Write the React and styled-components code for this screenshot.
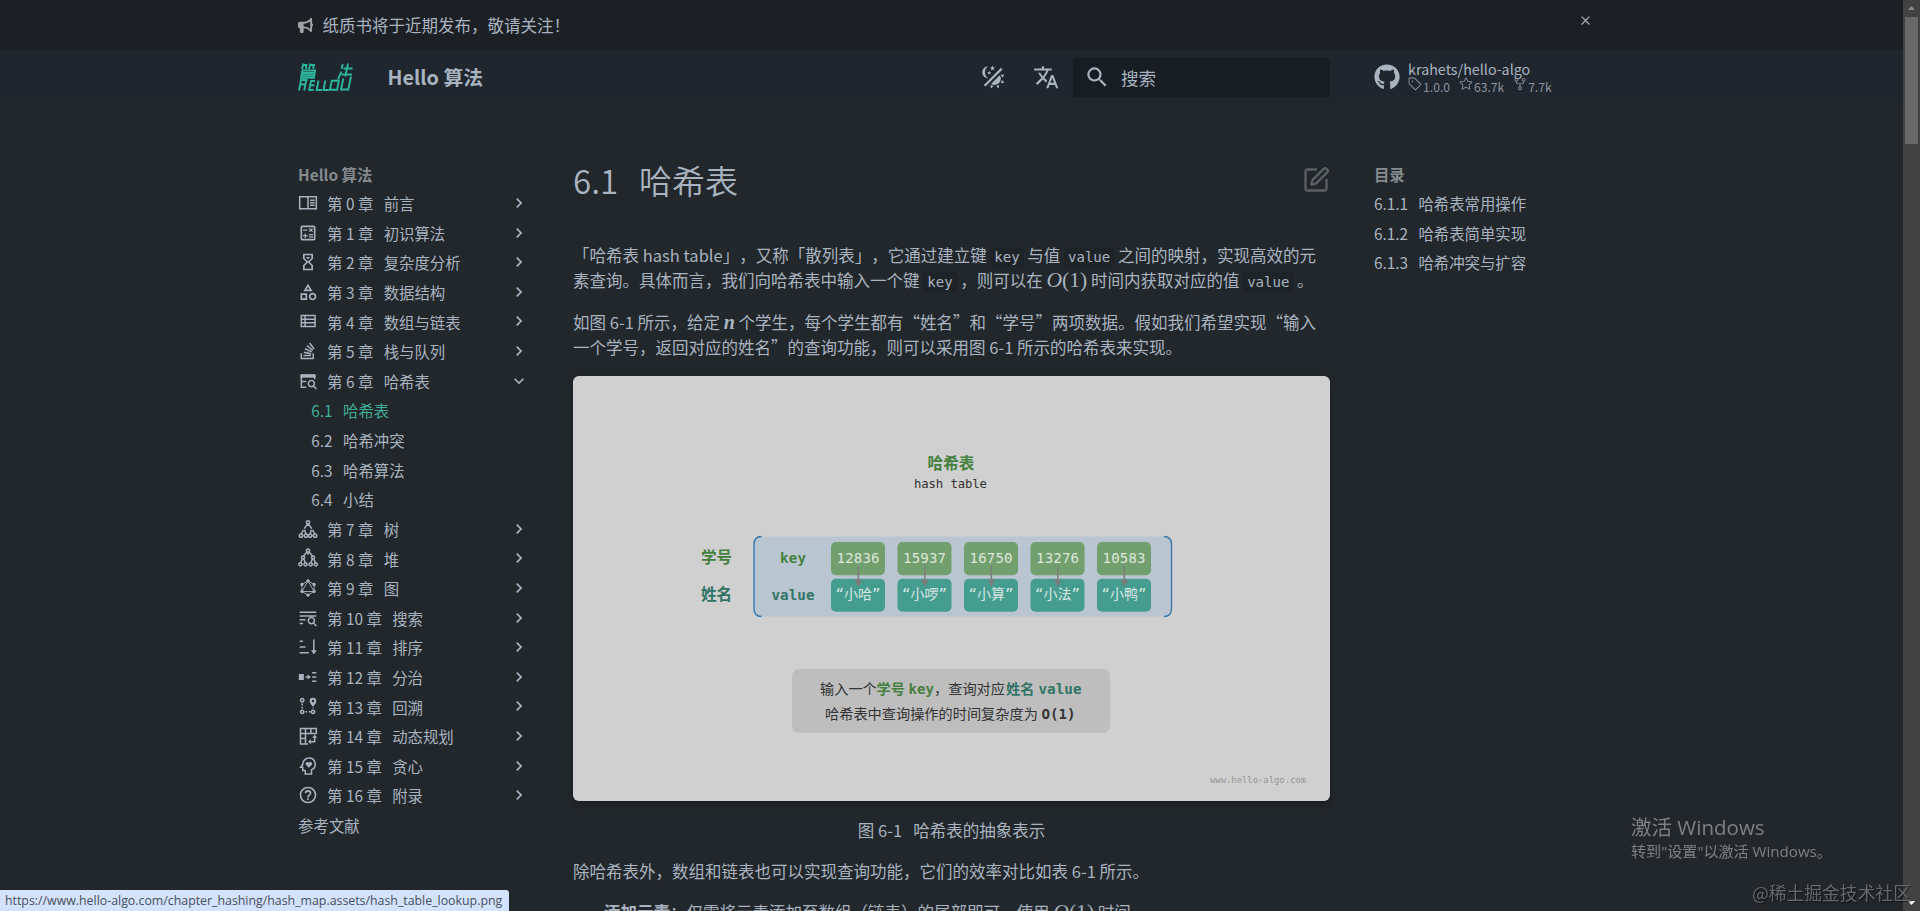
import React from "react";
import styled, { createGlobalStyle } from "styled-components";
import { FaBullhorn, FaGithub } from "react-icons/fa6";
import { GoTag, GoStar, GoRepoForked } from "react-icons/go";
import { MdClose, MdSearch, MdTranslate, MdChevronRight, MdExpandMore } from "react-icons/md";
import { SquarePen } from "lucide-react";

const sans = `"Noto Sans CJK SC", "Noto Sans", sans-serif`;
const mono = `"DejaVu Sans Mono", "Noto Sans CJK SC", monospace`;
const math = `"Liberation Serif", serif`;

const GlobalStyle = createGlobalStyle`
  * {
    box-sizing: border-box;
  }
  html {
    font-size: 22px;
    overflow: hidden;
  }
  body {
    margin: 0;
    background: #22272b;
    color: #a9b4c0;
    font-family: ${sans};
    text-spacing-trim: space-all;
    overflow: hidden;
  }
  p, h1, ul, figure {
    margin: 0;
    padding: 0;
  }
`;

const Window = styled.div`
  display: flex;
  height: 911px;
  overflow: hidden;
`;

const Page = styled.div`
  flex: 1;
  min-width: 0;
`;

const Banner = styled.aside`
  height: 50px;
  background: #1c2025;
`;

const Grid = styled.div`
  width: 61rem;
  margin: 0 auto;
`;

const BannerInner = styled(Grid)`
  display: flex;
  align-items: center;
  height: 50px;
  padding: 0 29.6px 0 17.6px;
  font-size: 16.5px;
  > svg {
    margin-right: 9.5px;
    color: #a1a4a6;
  }
  button {
    align-self: flex-start;
    display: flex;
    margin: 12.5px 0 0 auto;
    padding: 0;
    border: 0;
    background: none;
    color: #a5abb2;
  }
`;

const Header = styled.header`
  height: 52.8px;
  background: #1f262e;
`;

const HeaderInner = styled(Grid)`
  display: flex;
  align-items: center;
  height: 52.8px;
  padding: 2px 4.4px 0 17.6px;
`;

const SiteTitle = styled.div`
  flex: 1;
  margin-top: -2px;
  margin-left: 34.5px;
  font-size: 19.8px;
  font-weight: 700;
`;

const HeaderIcon = styled.span`
  display: flex;
  width: 26.4px;
  height: 26.4px;
  margin-right: ${(props) => props.$gap};
  svg {
    width: 100%;
    height: 100%;
  }
`;

const SearchBox = styled.div`
  display: flex;
  align-items: center;
  width: 257.4px;
  height: 39px;
  padding-left: 11px;
  border-radius: 2.2px;
  background: #181d23;
  font-size: 17.6px;
  svg {
    margin-right: 11px;
  }
`;

const Source = styled.div`
  display: flex;
  align-items: center;
  width: 257.4px;
  height: 50px;
  margin-left: 30.8px;
  padding-left: 13.2px;
  > svg {
    margin-right: 8.2px;
  }
`;

const Repo = styled.div`
  font-size: 14.3px;
  line-height: 17px;
`;

const Facts = styled.div`
  display: flex;
  gap: 9px;
  height: 17px;
  font-size: 12.1px;
  line-height: 20px;
  color: #8d95a0;
  span {
    display: flex;
  }
  svg {
    margin-right: 1px;
  }
`;

const Main = styled(Grid)`
  display: flex;
  padding-top: 56.8px;
`;

const Sidebar = styled.nav`
  width: 266.2px;
  padding: 0 17.6px;
  font-size: 15.4px;
`;

const NavTitle = styled.div`
  height: 29.62px;
  line-height: 28px;
  font-weight: 700;
  color: #858a8e;
`;

const NavRow = styled.div`
  display: flex;
  align-items: center;
  height: 29.62px;
  line-height: 29.62px;
  white-space: pre;
  padding-left: ${(props) => (props.$sub ? "13.2px" : "0")};
  color: ${(props) => (props.$active ? "#3fae98" : "inherit")};
  > svg {
    margin-bottom: 2px;
  }
  > svg:first-child {
    margin-right: 9px;
  }
  > svg:last-child:not(:first-child) {
    margin-left: auto;
  }
`;

const Content = styled.article`
  width: 809.6px;
  padding: 0 26.4px;
  font-size: 16.5px;
  line-height: 24.75px;
`;

const Heading = styled.h1`
  display: flex;
  align-items: center;
  justify-content: space-between;
  height: 41.8px;
  margin-bottom: 41.6px;
  font-size: 33px;
  font-weight: 350;
  word-spacing: -0.4px;
  white-space: pre;
  svg {
    color: #5b6064;
  }
`;

const Paragraph = styled.p`
  margin-bottom: ${(props) => props.$gap || "16.5px"};
  white-space: nowrap;
`;

const Code = styled.code`
  padding: 2px 4px;
  border-radius: 2px;
  background: #1e2327;
  font-family: ${mono};
  font-size: 14px;
  line-height: 0;
`;

const Formula = styled.span`
  font-family: ${math};
  font-size: ${(props) => (props.$bold ? "20px" : "21.6px")};
  line-height: 0;
  i {
    font-weight: ${(props) => (props.$bold ? 700 : 400)};
  }
`;

const Figure = styled.figure`
  height: 425px;
  border-radius: 6px;
  background: #d0d0d0;
  box-shadow: 0 3px 8px rgba(0, 0, 0, 0.25);
  overflow: hidden;
  svg {
    display: block;
  }
`;

const Caption = styled.p`
  margin: 17px 0 16.5px;
  text-align: center;
  white-space: pre;
`;

const List = styled.ul`
  padding-left: 31px;
  list-style: none;
  white-space: nowrap;
  li::before {
    content: "";
    display: inline-block;
    width: 5px;
    height: 5px;
    margin: 0 13px 0 -18px;
    border-radius: 50%;
    background: currentColor;
    vertical-align: 2px;
  }
`;

const ScrollTrack = styled.div`
  display: flex;
  flex-direction: column;
  align-items: center;
  justify-content: space-between;
  width: 17px;
  background: #424242;
`;

const Thumb = styled.div`
  width: 13px;
  height: 127px;
  margin: 4px 0 auto;
  background: #686868;
`;

const StatusBar = styled.div`
  position: fixed;
  left: 0;
  bottom: 0;
  width: 509px;
  height: 21px;
  padding-left: 5px;
  border-top-right-radius: 3px;
  background: #d3e3fd;
  color: #474f5a;
  font: 12.35px/21px "Open Sans", sans-serif;
  white-space: nowrap;
`;

const Activation = styled.div`
  position: fixed;
  left: 1631px;
  top: 813px;
  color: #7d8184;
  font-family: "Open Sans", "Noto Sans CJK SC", sans-serif;
  font-size: 15.1px;
  line-height: 20px;
  white-space: nowrap;
  div {
    font-size: 20.5px;
    line-height: 28px;
  }
`;

const Watermark = styled.div`
  position: fixed;
  right: 9px;
  bottom: 6px;
  color: #65696c;
  font-size: 17.8px;
  line-height: 26px;
  text-shadow: 1px 1px 1px rgba(0, 0, 0, 0.5);
`;

const Logo = () => (
  <svg width="55" height="28" viewBox="0 0 55 28" fill="none" stroke="#2bb59c" strokeWidth="1.9">
    <path d="M5.500 .5 4 6M5 2h4.500M7.800 2.500l.7 3.500M12.500 .5 11 6M12 2h5M15 2.500l.7 3.500" />
    <path d="M4.500 7.500h12.500l-1.200 7.300h-12.600zM4 10h12.500M3.800 12.400h12.500" strokeWidth="2.100" />
    <path d="M2.500 17h7M3.200 16l-2.200 11.500M1.500 21.500h6M8.300 17l-2.100 10.500" />
    <path d="M17 18h-4l-1.800 9h4.500M12.500 22.300h4M20.500 17.500l-1.800 9.500h5.300M27.300 17.500l-1.800 9.500h5.300M33.800 17.800h7l-1.700 9h-7.200z" />
    <path d="M44.800 1l-1.300 5M43.300 8.500l-3.300 8M50 .5l-2.700 13M45.500 5.500h9M43.500 11.500h10.500M45.300 15.500l-2.300 11h7.300l2.700-13" />
  </svg>
);

const ThemeIcon = () => (
  <svg viewBox="0 0 24 24" fill="currentColor">
    <path d="M7.5 2C5.7 3.2 4.5 5.2 4.5 7.5S5.7 11.9 7.5 13C4.5 13 2 10.5 2 7.5A5.5 5.5 0 0 1 7.5 2M19.1 3.5 20.5 4.9 4.9 20.5 3.5 19.1 19.1 3.5M12.9 5.9 11.4 5 9.9 6l.4-1.8L9 3.1 10.7 3l.7-1.6L12 3l1.7.2-1.3 1 .5 1.7M9.6 9.5 8.4 8.8l-1.2.8.4-1.4-1.1-.8 1.4-.1L8.4 6l.5 1.4 1.3.1-1 .8.4 1.2M19 13.5a5.5 5.5 0 0 1-5.5 5.5c-1.2 0-2.4-.4-3.3-1.1l7.7-7.7c.7.9 1.1 2.1 1.1 3.3M14.6 20.1l2.8-1.2-.3 3.3-2.5-2.1M18.9 17.4l1.2-2.8 2.1 2.5-3.3.3M20.1 12.4l-1.2-2.8 3.3.2-2.1 2.6M9.6 18.9l2.8 1.2-2.6 2.1-.2-3.3z" />
  </svg>
);

// 24x24 chapter icons. Entries in `line` are stroked, entries in `fill` are filled.
const icons = {
  book: { line: "M2 4.500h20v14.500h-20zM12 4.500v14.500M14.500 8.800H20M14.500 11.800H20M14.500 14.800H20" },
  calculator: {
    fill: "M19,3H5C3.9,3 3,3.9 3,5V19C3,20.1 3.9,21 5,21H19C20.1,21 21,20.1 21,19V5C21,3.9 20.1,3 19,3M19,19H5V5H19V19M6.2,7.7H11.2V9.2H6.2V7.7M13,15.8H18V17.3H13V15.8M13,13.2H18V14.7H13V13.2M8,18H9.5V16H11.5V14.5H9.5V12.5H8V14.5H6V16H8V18M14.1,10.9L15.5,9.5L16.9,10.9L18,9.9L16.6,8.5L18,7.1L16.9,6L15.5,7.4L14.1,6L13,7.1L14.4,8.5L13,9.9L14.1,10.9Z",
  },
  sand: {
    fill: "M6,2H18V8L14,12L18,16V22H6V16L10,12L6,8V2M16,16.5L12,12.5L8,16.5V20H16V16.5M12,11.5L16,7.5V4H8V7.5L12,11.5M10,6H14V6.75L12,8.75L10,6.75V6Z",
  },
  shape: {
    fill: "M11,13.5V21.5H3V13.5H11M9,15.5H5V19.5H9V15.5M12,2L17.5,11H6.5L12,2M12,5.86L10.08,9H13.92L12,5.86M17.5,13C20,13 22,15 22,17.5C22,20 20,22 17.5,22C15,22 13,20 13,17.5C13,15 15,13 17.5,13M17.5,15A2.5,2.5 0 0,0 15,17.5A2.5,2.5 0 0,0 17.5,20A2.5,2.5 0 0,0 20,17.5A2.5,2.5 0 0,0 17.5,15Z",
  },
  list: { line: "M4 5.5h16.5v13H4zM4 9.8h16.5M4 14.2h16.5M8.5 5.5v13" },
  stack: {
    fill: "M17.36,20.2V14.82H19.15V22H3V14.82H4.8V20.2H17.36M6.77,14.32L7.14,12.56L15.93,14.41L15.56,16.17L6.77,14.32M7.93,10.11L8.69,8.5L16.83,12.28L16.07,13.9L7.93,10.11M10.19,6.12L11.34,4.74L18.24,10.5L17.09,11.87L10.19,6.12M14.64,1.87L20,9.08L18.56,10.15L13.2,2.94L14.64,1.87M6.59,18.41V16.61H15.57V18.41H6.59Z",
  },
  tableSearch: {
    line: "M10 19.500H4V5h16v5M4 12.500h6M16 11.500a3.700 3.700 0 1 0 .1 0M18.500 18l3.700 3.700",
    fill: "M3 4h18v4H3z",
  },
  tree: {
    line: "M12 5.500v3M11.500 6 7.500 11.500M12.500 6l4 5.500M6.500 13l-2.500 5M8 13l1.500 5M16 13l-1.500 5M17.500 13l2.500 5M12 2a1.900 1.900 0 1 0 .1 0M3.500 18a2 2 0 1 0 .1 0M9.500 18a2 2 0 1 0 .1 0M14.700 18a2 2 0 1 0 .1 0M20.500 18a2 2 0 1 0 .1 0",
  },
  heap: {
    line: "M12 5v3M10.500 5 6.500 9.500M13.500 5l4 4.500M6 9.500a1.800 1.800 0 1 0 .1 0M18 9.500a1.800 1.800 0 1 0 .1 0M5.300 13l-2 4.500M7 13l1.500 4.500M17.300 13l-1.700 4.500M18.800 13l2 4.500M12 1.300a1.900 1.900 0 1 0 .1 0M2.800 17.700a1.900 1.900 0 1 0 .1 0M9 17.700a1.900 1.900 0 1 0 .1 0M15.200 17.700a1.900 1.900 0 1 0 .1 0M21.300 17.700a1.900 1.900 0 1 0 .1 0",
  },
  graph: {
    thin: "M12 3.5 4.7 7.8v8.4L12 20.5l7.3-4.3V7.8zM12 3.5 4.7 16.2h14.6z",
    fill: "M12 1.5a2 2 0 1 0 .1 0M12 18.5a2 2 0 1 0 .1 0M4.7 5.8a2 2 0 1 0 .1 0M19.3 5.8a2 2 0 1 0 .1 0M4.7 14.2a2 2 0 1 0 .1 0M19.3 14.2a2 2 0 1 0 .1 0",
  },
  textSearch: { line: "M2 5h20M2 9.500h20M2 14h7M2 18.500h4M16 11.500a3.700 3.700 0 1 0 .1 0M18.500 18l3.700 3.700" },
  sort: { line: "M2 5h4M2 12h7M2 19h11M19 3v14", fill: "M15.500 16h7l-3.500 5z" },
  split: { line: "M9 12h4M17 7h5M17 12h5M17 17h5", fill: "M1 8.5h6v7H1zM11.5 9l4 3-4 3z" },
  path: {
    line: "M5 3a2 2 0 1 0 .1 0M5 17a2 2 0 1 0 .1 0M18 17a2 2 0 1 0 .1 0M5 9v2M5 13v2M9 19h2M13 19h2M18 14v1",
    fill: "M18 2a4 4 0 0 1 4 4c0 3-4 7-4 7s-4-4-4-7a4 4 0 0 1 4-4m0 2.6a1.5 1.5 0 1 0 .1 0",
  },
  pivot: { line: "M12 21.500H3V3H22V9H3M9 3V21.500M15.500 3V9M3 15H9M20 13.500v5.500h-5", fill: "M17 14l3-3.500 3 3.500zM15.500 16v6l-3.500-3z" },
  head: {
    line: "M13 2.500a7.300 7.300 0 0 0-7.300 7.300l-2.500 3.700h2.500v4h3V21.500h7.500v-5a7.300 7.300 0 0 0-3.200-14z",
    fill: "M13 14l-3.500-3.400a2 2 0 0 1 3.500-2.500 2 2 0 0 1 3.500 2.500z",
  },
  help: {
    fill: "M11,18H13V16H11V18M12,2A10,10 0 0,0 2,12A10,10 0 0,0 12,22A10,10 0 0,0 22,12A10,10 0 0,0 12,2M12,20C7.59,20 4,16.41 4,12C4,7.59 7.59,4 12,4C16.41,4 20,7.59 20,12C20,16.41 16.41,20 12,20M12,6A4,4 0 0,0 8,10H10A2,2 0 0,1 12,8A2,2 0 0,1 14,10C14,12 11,11.75 11,15H13C13,12.75 16,12.5 16,10A4,4 0 0,0 12,6Z",
  },
};

const ChapterIcon = ({ name }) => {
  const { line, thin, fill } = icons[name];
  return (
    <svg width="20" height="20" viewBox="0 0 24 24" fill="none" stroke="none">
      {line && <path d={line} stroke="currentColor" strokeWidth="1.8" />}
      {thin && <path d={thin} stroke="currentColor" strokeWidth="1.1" />}
      {fill && <path d={fill} fill="currentColor" fillRule="evenodd" />}
    </svg>
  );
};

const chapters = [
  { icon: "book", name: "前言" },
  { icon: "calculator", name: "初识算法" },
  { icon: "sand", name: "复杂度分析" },
  { icon: "shape", name: "数据结构" },
  { icon: "list", name: "数组与链表" },
  { icon: "stack", name: "栈与队列" },
  { icon: "tableSearch", name: "哈希表", children: ["哈希表", "哈希冲突", "哈希算法", "小结"] },
  { icon: "tree", name: "树" },
  { icon: "heap", name: "堆" },
  { icon: "graph", name: "图" },
  { icon: "textSearch", name: "搜索" },
  { icon: "sort", name: "排序" },
  { icon: "split", name: "分治" },
  { icon: "path", name: "回溯" },
  { icon: "pivot", name: "动态规划" },
  { icon: "head", name: "贪心" },
  { icon: "help", name: "附录" },
];

const pairs = [
  ["12836", "小哈"],
  ["15937", "小啰"],
  ["16750", "小算"],
  ["13276", "小法"],
  ["10583", "小鸭"],
];

const HashTableFigure = () => (
  <svg width="757" height="425" viewBox="0 0 757 425" fontFamily={sans}>
    <text x="378" y="92.500" fontSize="15.700" fontWeight="700" fill="#45803f" textAnchor="middle">哈希表</text>
    <text x="341" y="112" fontSize="12.300" fill="#333" fontFamily={mono} textLength="73">hash table</text>
    <g fontWeight="700" fontSize="15.600">
      <text x="128" y="187" fill="#45803f">学号</text>
      <text x="128" y="223.500" fill="#2f7464">姓名</text>
    </g>
    <rect x="181" y="160.500" width="417.500" height="80" rx="6" fill="#b9c6d1" />
    <path
      d="M188.500 160.500c-5 0-7.500 3-7.500 8v64c0 5 2.500 8 7.500 8M591 160.500c5 0 7.500 3 7.500 8v64c0 5-2.500 8-7.500 8"
      fill="none"
      stroke="#3878ab"
      strokeWidth="1.400"
    />
    <g fontFamily={mono} fontWeight="700" fontSize="14.200">
      <text x="207" y="187" fill="#45803f" textLength="26">key</text>
      <text x="198.500" y="223.500" fill="#2f7464" textLength="43">value</text>
    </g>
    {pairs.map(([key, value], i) => (
      <g key={key} transform={`translate(${258 + i * 66.5} 0)`}>
        <rect y="166" width="54" height="33.300" rx="5" fill="#729f6e" />
        <rect y="202.700" width="54" height="33" rx="5" fill="#459d90" />
        <path d="M27.300 190v15" stroke="#7c7c7c" strokeWidth="1.500" />
        <path d="M23.500 203.500h7.600l-3.800 7.500z" fill="#7c7c7c" />
        <text x="5.500" y="187" fontSize="14.100" fill="#dfe6dc" fontFamily={mono} textLength="43">{key}</text>
        <g fontSize="14" fill="#d9e6e3">
          <text x="4.500" y="223" fontFamily={mono}>“</text>
          <text x="13" y="223">{value}</text>
          <text x="41" y="223" fontFamily={mono}>”</text>
        </g>
      </g>
    ))}
    <rect x="219" y="293" width="318" height="64" rx="7" fill="#bebebe" />
    <g fontSize="14.200" fill="#333">
      <text x="247" y="317.500">输入一个</text>
      <text x="303.500" y="317.500" fontWeight="700" fill="#45803f">学号</text>
      <text x="335.500" y="317.500" fontWeight="700" fill="#45803f" fontFamily={mono} textLength="25.500">key</text>
      <text x="361" y="317.500">，查询对应</text>
      <text x="433" y="317.500" fontWeight="700" fill="#2f7464">姓名</text>
      <text x="465.500" y="317.500" fontWeight="700" fill="#2f7464" fontFamily={mono} textLength="43">value</text>
      <text x="252" y="343">哈希表中查询操作的时间复杂度为</text>
      <text x="468.500" y="343" fontWeight="700" fontFamily={mono} textLength="34">O(1)</text>
    </g>
    <text x="637" y="407" fontSize="8.900" fill="#949494" fontFamily={mono} textLength="96">www.hello-algo.com</text>
  </svg>
);

const App = () => {
  return (
    <>
      <GlobalStyle />
      <Window>
        <Page>
          <Banner>
            <BannerInner>
              <FaBullhorn size={15} />
              纸质书将于近期发布，敬请关注！
              <button>
                <MdClose size={15} />
              </button>
            </BannerInner>
          </Banner>
          <Header>
            <HeaderInner>
              <Logo />
              <SiteTitle>Hello 算法</SiteTitle>
              <HeaderIcon $gap="26.4px">
                <ThemeIcon />
              </HeaderIcon>
              <HeaderIcon $gap="13.2px">
                <MdTranslate />
              </HeaderIcon>
              <SearchBox>
                <MdSearch size={26.4} />
                搜索
              </SearchBox>
              <Source>
                <FaGithub size={26} />
                <div>
                  <Repo>krahets/hello-algo</Repo>
                  <Facts>
                    <span><GoTag size={14} />1.0.0</span>
                    <span><GoStar size={14} />63.7k</span>
                    <span><GoRepoForked size={14} />7.7k</span>
                  </Facts>
                </div>
              </Source>
            </HeaderInner>
          </Header>
          <Main>
            <Sidebar>
              <NavTitle>Hello 算法</NavTitle>
              {chapters.map((chapter, i) => (
                <React.Fragment key={chapter.icon}>
                  <NavRow>
                    <ChapterIcon name={chapter.icon} />
                    {`第 ${i} 章   ${chapter.name}`}
                    {chapter.children ? <MdExpandMore size={20} /> : <MdChevronRight size={20} />}
                  </NavRow>
                  {chapter.children?.map((name, j) => (
                    <NavRow key={name} $sub $active={j === 0}>
                      {`${i}.${j + 1}   ${name}`}
                    </NavRow>
                  ))}
                </React.Fragment>
              ))}
              <NavRow>参考文献</NavRow>
            </Sidebar>
            <Content>
              <Heading>
                {"6.1   哈希表"}
                <SquarePen size={28} />
              </Heading>
              <Paragraph $gap="17.5px">
                「哈希表 hash table」，又称「散列表」，它通过建立键 <Code>key</Code> 与值 <Code>value</Code> 之间的映射，实现高效的元<br />
                素查询。具体而言，我们向哈希表中输入一个键 <Code>key</Code> ，则可以在 <Formula><i>O</i>(1)</Formula> 时间内获取对应的值 <Code>value</Code> 。
              </Paragraph>
              <Paragraph>
                如图 6-1 所示，给定 <Formula $bold><i>n</i></Formula> 个学生，每个学生都有“姓名”和“学号”两项数据。假如我们希望实现“输入<br />
                一个学号，返回对应的姓名”的查询功能，则可以采用图 6-1 所示的哈希表来实现。
              </Paragraph>
              <Figure>
                <HashTableFigure />
              </Figure>
              <Caption>{"图 6-1   哈希表的抽象表示"}</Caption>
              <Paragraph>除哈希表外，数组和链表也可以实现查询功能，它们的效率对比如表 6-1 所示。</Paragraph>
              <List>
                <li>
                  <b>添加元素</b>：仅需将元素添加至数组（链表）的尾部即可，使用 <Formula><i>O</i>(1)</Formula> 时间
                </li>
              </List>
            </Content>
            <Sidebar>
              <NavTitle>目录</NavTitle>
              <NavRow>{"6.1.1   哈希表常用操作"}</NavRow>
              <NavRow>{"6.1.2   哈希表简单实现"}</NavRow>
              <NavRow>{"6.1.3   哈希冲突与扩容"}</NavRow>
            </Sidebar>
          </Main>
        </Page>
        <ScrollTrack>
          <svg width="9" height="13" viewBox="0 0 9 13"><path d="M4.500 6 8 10H1z" fill="#8a8a8a" /></svg>
          <Thumb />
          <svg width="9" height="13" viewBox="0 0 9 13"><path d="M4.500 7 8 3H1z" fill="#fff" /></svg>
        </ScrollTrack>
      </Window>
      <StatusBar>https://www.hello-algo.com/chapter_hashing/hash_map.assets/hash_table_lookup.png</StatusBar>
      <Activation>
        <div>激活 Windows</div>
        转到"设置"以激活 Windows。
      </Activation>
      <Watermark>@稀土掘金技术社区</Watermark>
    </>
  );
};

export default App;
